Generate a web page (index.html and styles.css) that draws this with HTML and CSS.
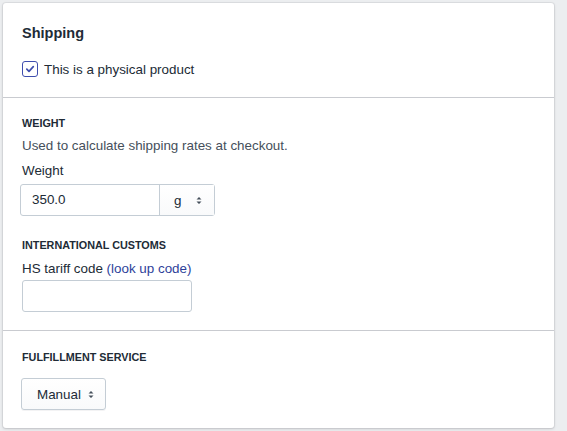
FILE: index.html
```html
<!DOCTYPE html>
<html>
<head>
<meta charset="utf-8">
<link rel="stylesheet" href="styles.css">
</head>
<body>
<div class="card">
  <section class="section section-top">
    <h2 class="title">Shipping</h2>
    <label class="check">
      <span class="box"><svg width="10" height="10" viewBox="0 0 10 10"><path d="M1.8 5.2 L4 7.3 L8.3 2.7" fill="none" stroke="#3f4eae" stroke-width="1.7" stroke-linecap="round" stroke-linejoin="round"/></svg></span>
      <span>This is a physical product</span>
    </label>
  </section>
  <section class="section section-mid">
    <h3 class="sub">WEIGHT</h3>
    <p class="help">Used to calculate shipping rates at checkout.</p>
    <div class="label">Weight</div>
    <div class="weight">
      <div class="wval">350.0</div>
      <div class="wunit"><span>g</span><svg class="arrows" width="6" height="9" viewBox="0 0 6 9"><path d="M0.5 3.5 L3 1 L5.5 3.5 Z M0.5 5.5 L3 8 L5.5 5.5 Z" fill="#454f5b"/></svg></div>
    </div>
    <h3 class="sub sub2">INTERNATIONAL CUSTOMS</h3>
    <div class="label">HS tariff code <a class="link">(look up code)</a></div>
    <div class="hs"></div>
  </section>
  <section class="section section-bot">
    <h3 class="sub">FULFILLMENT SERVICE</h3>
    <div class="select"><span>Manual</span><svg class="arrows" width="6" height="9" viewBox="0 0 6 9"><path d="M0.5 3.5 L3 1 L5.5 3.5 Z M0.5 5.5 L3 8 L5.5 5.5 Z" fill="#454f5b"/></svg></div>
  </section>
</div>
</body>
</html>
```
FILE: styles.css
```css
* { box-sizing: border-box; }
html, body { margin: 0; padding: 0; }
body {
  background: #eceef0;
  font-family: "Liberation Sans", Arial, sans-serif;
  color: #212b36;
  padding: 3px 13px 3px 3px;
  height: 431px;
}
.card {
  background: #fff;
  border-radius: 3px;
  box-shadow: 0 0 0 1px rgba(63,63,68,0.07), 0 1px 3px 0 rgba(63,63,68,0.2);
  width: 551px;
  height: 425px;
}
.section { padding: 0 19px; }
.section-top { height: 95px; padding-top: 20px; border-bottom: 1px solid #c9cbd0; }
.section-mid { height: 233px; padding-top: 17px; border-bottom: 1px solid #c9cbd0; }
.section-bot { padding-top: 18px; }
.title { margin: 0; font-size: 14.5px; font-weight: 600; line-height: 20px; }
.check { display: flex; align-items: center; gap: 6px; margin-top: 18px; font-size: 13.4px; }
.box {
  width: 16px; height: 16px; border: 1px solid #3f4eae; border-radius: 3px;
  display: flex; align-items: center; justify-content: center;
}
.sub { margin: 0; font-size: 10.8px; font-weight: 700; line-height: 16px; }
.help { margin: 6px 0 0; font-size: 13.4px; line-height: 18px; color: #454f5b; }
.label { margin-top: 7px; font-size: 13.4px; line-height: 18px; }
.weight {
  display: flex; margin-top: 4px; margin-left: -2px; width: 195px; height: 32px;
  border: 1px solid #c4cdd5; border-radius: 3px;
}
.wval { width: 139px; border-right: 1px solid #c4cdd5; padding: 0 0 0 11px; font-size: 13.4px; line-height: 30px; }
.wunit {
  flex: 1; display: flex; align-items: center; justify-content: space-between;
  padding: 0 12px 0 14px; font-size: 13.4px; background: linear-gradient(#fff, #f9fafb);
}
.sub2 { margin-top: 21px; }
.hs {
  margin-top: 2px; width: 170px; height: 32px;
  border: 1px solid #c4cdd5; border-radius: 3px;
}
.link { color: #2e3f9a; text-decoration: none; }
.select {
  margin-top: 13px; width: 85px; height: 32px; margin-left: -1px;
  border: 1px solid #c4cdd5; border-radius: 3px; display: flex; align-items: center;
  gap: 7px; padding-left: 15px; font-size: 13.4px;
  background: linear-gradient(#fff, #f9fafb);
  box-shadow: 0 1px 0 rgba(22,29,37,0.05);
}
```
